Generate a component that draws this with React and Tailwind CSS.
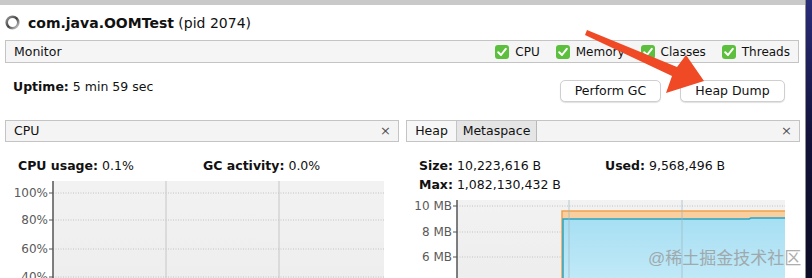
import React from 'react';

const font = { fontFamily: '"DejaVu Sans", "Liberation Sans", sans-serif' };

const CheckBox = ({ label }) => (
  <div className="flex items-center gap-[6px]">
    <svg width="14" height="14" viewBox="0 0 14 14">
      <rect x="0" y="0" width="14" height="14" rx="3" fill="#5cbf3e" />
      <path d="M3.2 7.2 L6 10 L10.8 3.8" stroke="#fff" strokeWidth="2" fill="none" strokeLinecap="round" strokeLinejoin="round" />
    </svg>
    <span className="text-[12px]">{label}</span>
  </div>
);

const Spinner = () => (
  <svg width="15" height="15" viewBox="0 0 15 15">
    <defs>
      <linearGradient id="spin" x1="0" y1="0" x2="1" y2="1">
        <stop offset="0" stopColor="#9a9a9a" />
        <stop offset="0.5" stopColor="#444" />
        <stop offset="1" stopColor="#d8d8d8" />
      </linearGradient>
    </defs>
    <circle cx="7.5" cy="7.5" r="5.8" stroke="url(#spin)" strokeWidth="2.6" fill="none" />
  </svg>
);

const PanelHeader = ({ children }) => (
  <div className="h-[22px] border border-[#c4c4c4] bg-[#f4f4f4] flex items-center">
    {children}
  </div>
);

const CpuChart = () => {
  const rows = [
    ['100%', 193],
    ['80%', 220],
    ['60%', 249],
    ['40%', 277],
  ];
  return (
    <svg width="394" height="102" viewBox="5 176 394 102" className="block">
      <defs>
        <linearGradient id="cpubg" x1="0" y1="0" x2="0" y2="1">
          <stop offset="0" stopColor="#f2f2f2" />
          <stop offset="1" stopColor="#ededed" />
        </linearGradient>
      </defs>
      <rect x="53" y="181" width="331" height="120" fill="url(#cpubg)" />
      {rows.map(([l, y]) => (
        <g key={l}>
          <line x1="53" x2="384" y1={y} y2={y} stroke="#b8b8b8" strokeWidth="0.8" strokeDasharray="1 1.5" />
          <line x1="49" x2="53" y1={y} y2={y} stroke="#555" strokeWidth="1" />
          <text x="48" y={y + 4} textAnchor="end" fontSize="12" fill="#5a5a5a" style={font}>{l}</text>
        </g>
      ))}
      <line x1="166" x2="166" y1="181" y2="300" stroke="#c6c6c6" strokeWidth="1" />
      <line x1="279" x2="279" y1="181" y2="300" stroke="#c6c6c6" strokeWidth="1" />
      <line x1="53" x2="53" y1="181" y2="300" stroke="#555" strokeWidth="1.5" />
    </svg>
  );
};

const MetaChart = () => {
  const rows = [
    ['10 MB', 206],
    ['8 MB', 232],
    ['6 MB', 257],
  ];
  return (
    <svg width="394" height="83" viewBox="406 195 394 83" className="block">
      <defs>
        <linearGradient id="metabg" x1="0" y1="0" x2="0" y2="1">
          <stop offset="0" stopColor="#f2f2f2" />
          <stop offset="1" stopColor="#ededed" />
        </linearGradient>
        <linearGradient id="blue" x1="0" y1="0" x2="0" y2="1">
          <stop offset="0" stopColor="#a6dff3" />
          <stop offset="1" stopColor="#c6ebf8" />
        </linearGradient>
      </defs>
      <rect x="457" y="200" width="328" height="90" fill="url(#metabg)" />
      {rows.map(([l, y]) => (
        <g key={l}>
          <line x1="457" x2="785" y1={y} y2={y} stroke="#b8b8b8" strokeWidth="0.8" strokeDasharray="1 1.5" />
          <line x1="453" x2="457" y1={y} y2={y} stroke="#555" strokeWidth="1" />
          <text x="452" y={y + 4} textAnchor="end" fontSize="12" fill="#5a5a5a" style={font}>{l}</text>
        </g>
      ))}
      <polygon points="562,290 562,211 785,211 785,290" fill="#f9cf9f" />
      <polyline points="562,290 562,211 785,211" fill="none" stroke="#f0a24e" strokeWidth="1.5" />
      <polygon points="563,290 563,219 749,219 751,218 785,218 785,290" fill="url(#blue)" />
      <polyline points="563,290 563,219 749,219 751,218 785,218" fill="none" stroke="#2aa5c5" strokeWidth="1.5" />
      <line x1="569" x2="569" y1="200" y2="290" stroke="#9fb8c2" strokeWidth="1" opacity="0.7" />
      <line x1="682" x2="682" y1="200" y2="290" stroke="#9fb8c2" strokeWidth="1" opacity="0.7" />
      <line x1="457" x2="457" y1="200" y2="290" stroke="#555" strokeWidth="1.5" />
    </svg>
  );
};

const Arrow = () => (
  <svg width="812" height="278" className="absolute left-0 top-0 pointer-events-none">
    <polygon
      points="587,30 585,35 672,76 666,93 704,81 686,55 677,67"
      fill="#ef4a25"
    />
  </svg>
);

export default function App() {
  return (
    <div className="relative w-[812px] h-[278px] overflow-hidden flex text-[12.5px] text-[#111]" style={font}>
      <div className="w-[806px] bg-white border-r border-[#8e8e8e] flex flex-col shrink-0">
        <div className="h-[5px] bg-[#c9c9c9]" />
        <div className="h-[36px] flex items-center pl-[5px] gap-[8px]">
          <Spinner />
          <div className="text-[14px] leading-[18px]">
            <span className="font-bold">com.java.OOMTest</span> (pid 2074)
          </div>
        </div>
        <div className="ml-[5px] mr-[6px] h-[23px] border border-[#c4c4c4] bg-[#f5f5f5] flex items-center justify-between pl-[8px] pr-[8px]">
          <span className="pt-[1px]">Monitor</span>
          <div className="flex items-center gap-[16px] pt-[1px]">
            <CheckBox label="CPU" />
            <CheckBox label="Memory" />
            <CheckBox label="Classes" />
            <CheckBox label="Threads" />
          </div>
        </div>
        <div className="h-[58px] flex items-start justify-between pl-[13px] pr-[20px]">
          <div className="mt-[16px] leading-[16px]">
            <span className="font-bold">Uptime:</span> 5 min 59 sec
          </div>
          <div className="mt-[17px] flex gap-[19px]">
            <button className="w-[101px] h-[22px] rounded-[5px] border border-[#cfcfcf] bg-white shadow-[0_1px_1px_rgba(0,0,0,0.12)]">
              Perform GC
            </button>
            <button className="w-[105px] h-[22px] rounded-[5px] border border-[#cfcfcf] bg-white shadow-[0_1px_1px_rgba(0,0,0,0.12)]">
              Heap Dump
            </button>
          </div>
        </div>
        <div className="ml-[5px] mr-[6px] flex gap-[7px]">
          <div className="w-[394px] shrink-0">
            <PanelHeader>
              <span className="pl-[8px] flex-1">CPU</span>
              <span className="pr-[7px] text-[13px] text-[#555]">×</span>
            </PanelHeader>
            <div className="pl-[13px] pt-[15px] h-[18px] box-content flex leading-[18px]">
              <div className="w-[185px]">
                <span className="font-bold">CPU usage:</span> 0.1%
              </div>
              <div>
                <span className="font-bold">GC activity:</span> 0.0%
              </div>
            </div>
            <div className="mt-[1px]">
              <CpuChart />
            </div>
          </div>
          <div className="flex-1 relative">
            <div className="h-[22px] border border-[#c4c4c4] bg-[#f4f4f4] flex items-stretch">
              <div className="w-[50px] bg-[#f7f7f7] border-r border-[#c4c4c4] flex items-center justify-center">Heap</div>
              <div className="w-[80px] bg-[#e5e5e5] border-r border-[#b8b8b8] flex items-center justify-center">Metaspace</div>
              <div className="flex-1" />
              <span className="pr-[7px] text-[13px] text-[#555] self-center">×</span>
            </div>
            <div className="pl-[13px] pt-[14px] leading-[19px]">
              <div className="flex">
                <div className="w-[186px]">
                  <span className="font-bold">Size:</span> 10,223,616 B
                </div>
                <div>
                  <span className="font-bold">Used:</span> 9,568,496 B
                </div>
              </div>
              <div>
                <span className="font-bold">Max:</span> 1,082,130,432 B
              </div>
            </div>
            <div className="mt-[1px]">
              <MetaChart />
            </div>
            <div
              className="absolute left-[242px] top-[126px] text-[17px] text-[#9a9a9a] opacity-80 whitespace-nowrap"
              style={{ fontFamily: '"Liberation Sans", "Noto Sans CJK SC", sans-serif' }}
            >
              @稀土掘金技术社区
            </div>
          </div>
        </div>
      </div>
      <div className="flex-1 bg-gradient-to-b from-[#2a2d78] via-[#12123a] to-[#0c0c24]" />
      <Arrow />
    </div>
  );
}
